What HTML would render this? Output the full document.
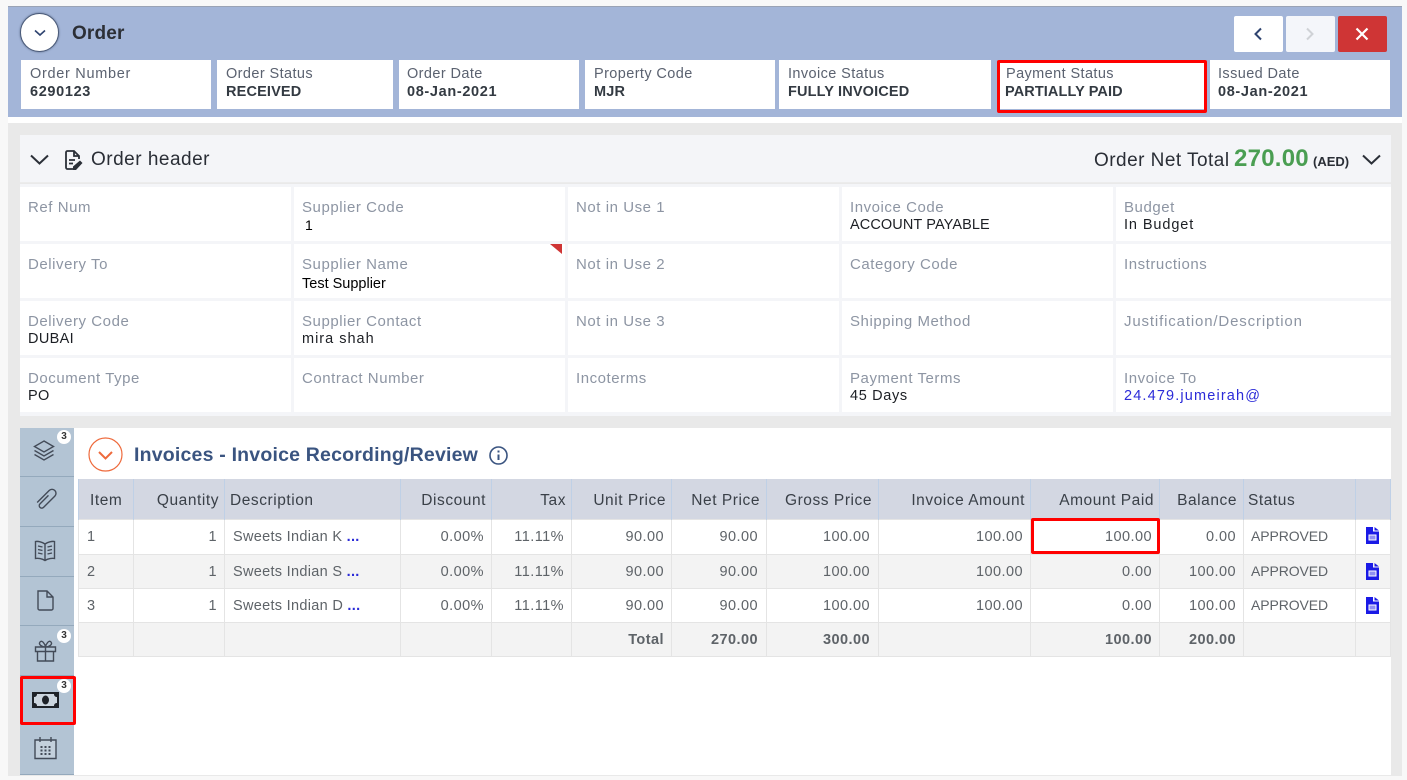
<!DOCTYPE html>
<html><head><meta charset="utf-8"><title>Order</title>
<style>
html,body{margin:0;padding:0;width:1407px;height:780px;overflow:hidden;background:#f8f8f8;font-family:"Liberation Sans",sans-serif}
.a{position:absolute}
#stage{position:relative;width:1407px;height:780px;overflow:hidden}
.c{position:absolute;background:#fff;top:60px;height:49px}
.c b,.c i{position:absolute;left:9px;white-space:nowrap;font-style:normal}
.c i{top:6px;font-size:14.5px;letter-spacing:.4px;color:#5b6270}
.c b{top:24px;font-size:14.5px;letter-spacing:.15px;color:#333a42}
.c b.n{letter-spacing:.65px}
.f{position:absolute;background:#fff;height:54px}
.f i,.f b{position:absolute;left:8px;white-space:nowrap;font-style:normal;font-weight:400}
.f i{top:12px;font-size:15px;letter-spacing:.55px;color:#8d95a3}
.f b{top:30px;font-size:14.5px;letter-spacing:.35px;color:#1c1f24}
table{position:absolute;left:78px;top:479px;width:1312px;border-collapse:collapse;table-layout:fixed;font-size:14.5px;letter-spacing:.45px;color:#5e6368}
th{background:#d3d7e2;height:40px;font-size:15.5px;font-weight:400;color:#3a4048;padding:4px 5px 0 5px;box-sizing:border-box;border-left:1px solid #bfd0e6;border-right:1px solid #bfd0e6;text-align:right;white-space:nowrap;letter-spacing:.55px}
td{height:31px;padding:2px 7px 0;border:1px solid #e4e4e4;text-align:right;white-space:nowrap;overflow:hidden}
tr.r1 td{height:34px;padding-top:0}
tr:nth-child(odd) td{background:#f3f3f3}
td.l{text-align:left;padding-left:8px;letter-spacing:.3px}
td.s{padding-left:7px;padding-top:0;height:33px;font-size:14px;letter-spacing:-.1px}
tr.r1 td.s{height:32px;padding-bottom:2px}
td:nth-child(7),td:nth-child(8){padding-right:8px}
th.l{text-align:left}
.tot td{font-weight:700;background:#f3f3f3;letter-spacing:.45px}
.dots{color:#2b2bd8;font-weight:700}
.ic{position:absolute;left:33px;fill:none;stroke:#434b58;stroke-width:1.4}
.bd{position:absolute;left:57px;width:14px;height:14px;border-radius:50%;background:#fff;font-size:10px;font-weight:700;text-align:center;line-height:14px;color:#333}
.dv{position:absolute;left:20px;width:54px;height:1px;background:#94a9bc}
.red{position:absolute;border:3px solid #f00;box-sizing:border-box;border-radius:2px}
.btn{position:absolute;top:16px;width:49px;height:36px;border-radius:2px;background:#fff}
</style></head><body><div id="stage">

<div class="a" style="left:8px;top:6px;width:1394px;height:770px;background:#e9e9e9"></div>
<div class="a" style="left:8px;top:6px;width:1394px;height:111px;background:#a3b5d8;border-top:1px solid #9aa3b5;box-sizing:border-box"></div>
<div class="a" style="left:8px;top:117px;width:1394px;height:6px;background:#fff"></div>

<div class="a" style="left:20px;top:13px;width:39px;height:39px;border-radius:50%;background:#fff;border:1px solid #4a5a78;box-sizing:border-box;box-shadow:0 0 2px #5a6a88"></div>
<svg class="a" style="left:33px;top:29px" width="14" height="8" fill="none" stroke="#2f4470" stroke-width="1.6"><path d="M2 1.500l5 4.500 5-4.500"/></svg>
<div class="a" style="left:72px;top:23px;font-size:19px;font-weight:700;color:#2c2f36;letter-spacing:.15px">Order</div>

<div class="btn" style="left:1234px"><svg class="a" style="left:19px;top:11px" width="10" height="14" fill="none" stroke="#2f4470" stroke-width="2"><path d="M8 1.500L2.500 7 8 12.500"/></svg></div>
<div class="btn" style="left:1286px;background:#f4f6fa"><svg class="a" style="left:19px;top:11px" width="10" height="14" fill="none" stroke="#cfd2d6" stroke-width="2"><path d="M2 1.500L7.500 7 2 12.500"/></svg></div>
<div class="btn" style="left:1338px;background:#cf3535"><svg class="a" style="left:17px;top:11px" width="14" height="14" fill="none" stroke="#fff" stroke-width="2.200"><path d="M1.500 1.500l11 11M12.500 1.500l-11 11"/></svg></div>

<div class="c" style="left:21px;width:190px"><i style="letter-spacing:.7px">Order Number</i><b class="n">6290123</b></div>
<div class="c" style="left:217px;width:176px"><i>Order Status</i><b>RECEIVED</b></div>
<div class="c" style="left:399px;width:180px"><i style="left:8px">Order Date</i><b class="n" style="left:8px">08-Jan-2021</b></div>
<div class="c" style="left:585px;width:190px"><i>Property Code</i><b>MJR</b></div>
<div class="c" style="left:779px;width:212px"><i>Invoice Status</i><b>FULLY INVOICED</b></div>
<div class="c" style="left:998px;width:208px"><i style="left:8px">Payment Status</i><b style="left:7px;letter-spacing:.1px">PARTIALLY PAID</b></div>
<div class="c" style="left:1210px;width:180px"><i style="left:8px">Issued Date</i><b class="n" style="left:8px">08-Jan-2021</b></div>
<div class="red" style="left:997px;top:60px;width:210px;height:53px"></div>

<div class="a" style="left:20px;top:135px;width:1371px;height:48px;background:#f4f5f8;border-bottom:1px solid #ececec;box-sizing:border-box"></div>
<svg class="a" style="left:30px;top:154px" width="19" height="11" fill="none" stroke="#2b3038" stroke-width="2"><path d="M1 1.500l8.500 8 8.500-8"/></svg>
<svg class="a" style="left:64px;top:150px" width="20" height="21" fill="none" stroke="#2b3038" stroke-width="1.800"><path d="M9 19H3.500a1.500 1.500 0 0 1-1.500-1.500V2.500A1.500 1.500 0 0 1 3.500 1H10l5 5v3M10 1v5h5M5 10h6M5 13.500h4"/><path d="M9 20v-3.500l7-6 2.500 2.500-6.500 7z" fill="#2b3038" stroke="none"/></svg>
<div class="a" style="left:91px;top:149px;font-size:19px;letter-spacing:.5px;color:#2a2e36;white-space:nowrap">Order header</div>
<div class="a" style="left:1094px;top:150px;font-size:19px;letter-spacing:.47px;color:#2a2e36;white-space:nowrap">Order Net Total</div>
<div class="a" style="left:1234px;top:145px;font-size:24px;font-weight:700;letter-spacing:.25px;color:#4a9e52;white-space:nowrap">270.00</div>
<div class="a" style="left:1313px;top:154px;font-size:13px;font-weight:700;color:#2a2e36;white-space:nowrap">(AED)</div>
<svg class="a" style="left:1362px;top:154px" width="19" height="11" fill="none" stroke="#2b3038" stroke-width="2"><path d="M1 1.500l8.500 8 8.500-8"/></svg>

<div class="a" style="left:20px;top:184px;width:1371px;height:232px;background:#f4f5f8"></div>

<div class="f" style="left:20px;top:187px;width:271px"><i>Ref Num</i></div>
<div class="f" style="left:294px;top:187px;width:271px"><i>Supplier Code</i><b style="left:11px;font-size:14px;letter-spacing:0;color:#000">1</b></div>
<div class="f" style="left:568px;top:187px;width:271px"><i>Not in Use 1</i></div>
<div class="f" style="left:842px;top:187px;width:271px"><i>Invoice Code</i><b style="letter-spacing:.1px">ACCOUNT PAYABLE</b></div>
<div class="f" style="left:1116px;top:187px;width:275px"><i>Budget</i><b style="letter-spacing:.9px">In Budget</b></div>

<div class="f" style="left:20px;top:244px;width:271px"><i>Delivery To</i></div>
<div class="f" style="left:294px;top:244px;width:271px"><i>Supplier Name</i><b style="top:32px;font-size:14.5px;letter-spacing:0;color:#000">Test Supplier</b></div>
<div class="f" style="left:568px;top:244px;width:271px"><i>Not in Use 2</i></div>
<div class="f" style="left:842px;top:244px;width:271px"><i>Category Code</i></div>
<div class="f" style="left:1116px;top:244px;width:275px"><i>Instructions</i></div>

<div class="f" style="left:20px;top:301px;width:271px"><i>Delivery Code</i><b>DUBAI</b></div>
<div class="f" style="left:294px;top:301px;width:271px"><i>Supplier Contact</i><b style="letter-spacing:1px">mira shah</b></div>
<div class="f" style="left:568px;top:301px;width:271px"><i>Not in Use 3</i></div>
<div class="f" style="left:842px;top:301px;width:271px"><i>Shipping Method</i></div>
<div class="f" style="left:1116px;top:301px;width:275px"><i style="letter-spacing:.85px">Justification/Description</i></div>

<div class="f" style="left:20px;top:358px;width:271px"><i>Document Type</i><b>PO</b></div>
<div class="f" style="left:294px;top:358px;width:271px"><i>Contract Number</i></div>
<div class="f" style="left:568px;top:358px;width:271px"><i>Incoterms</i></div>
<div class="f" style="left:842px;top:358px;width:271px"><i>Payment Terms</i><b style="letter-spacing:.65px">45 Days</b></div>
<div class="f" style="left:1116px;top:358px;width:275px"><i>Invoice To</i><b style="color:#2b2bd8;letter-spacing:1.15px">24.479.jumeirah@</b></div>
<svg class="a" style="left:550px;top:244px" width="12" height="10"><path d="M0 0h12v10z" fill="#cf3535"/></svg>

<!-- lower panel -->
<div class="a" style="left:20px;top:428px;width:54px;height:347px;background:#b3c4d4"></div>
<div class="a" style="left:74px;top:428px;width:1317px;height:347px;background:#fff"></div>
<div class="dv" style="top:476px"></div><div class="dv" style="top:526px"></div><div class="dv" style="top:576px"></div><div class="dv" style="top:625px"></div><div class="dv" style="top:675px"></div><div class="dv" style="top:774px"></div>

<svg class="ic" style="top:439px;left:32px" width="24" height="24"><path d="M12 2l9.500 5.500L12 13 2.500 7.500z"/><path d="M2.500 11.500L12 17l9.500-5.500M2.500 15.500L12 21l9.500-5.500"/></svg>
<svg class="ic" style="top:488px;left:34px" width="24" height="24"><g transform="rotate(45 12 12)"><path d="M10.500 7v12a2.500 2.500 0 0 0 5 0V3a4 4 0 0 0-8 0v17"/></g></svg>
<svg class="ic" style="top:539px" width="24" height="24"><path d="M12 5C9 3 5 2 2.500 2.500v17C5 19 9 19.500 12 21.500c3-2 7-2.500 9.500-2v-17C19 2 15 3 12 5zM12 5v16.500M5 7l4.500 1M5 10.500l4.500 1M5 14l4.500 1M19 7l-4.500 1M19 10.500l-4.500 1M19 14l-4.500 1"/></svg>
<svg class="ic" style="top:589px" width="24" height="24"><path d="M5 2h9l6 6v11.500a1.500 1.500 0 0 1-1.500 1.500h-12A1.500 1.500 0 0 1 5 19.500zM14 2v6h6"/></svg>
<svg class="ic" style="top:639px;left:33px" width="24" height="24"><path d="M2.500 8h20v4.500h-20zM4.500 12.500V22h16v-9.500M12.500 8v14M12.500 8C9 8 5 5.500 7 3s5 2 5.500 5c.5-3 3.500-7.500 5.500-5s-2 5-5.500 5z"/></svg>
<svg class="a" style="left:32px;top:692px" width="27" height="16"><rect x="1" y="1" width="25" height="14" fill="#ccd6df" stroke="#1e2228" stroke-width="2"/><path d="M0 0h5v2.500a3 3 0 0 1-2.500 2.500H0zM27 0h-5v2.500A3 3 0 0 0 24.500 5H27zM0 16h5v-2.500A3 3 0 0 0 2.500 11H0zM27 16h-5v-2.500a3 3 0 0 1 2.500-2.500H27z" fill="#1e2228"/><ellipse cx="13.500" cy="8" rx="3.500" ry="4.500" fill="#1e2228"/></svg>
<svg class="ic" style="top:736px;left:33px" width="24" height="24"><path d="M2 4h21v18.500H2z" fill="#c3d0dc"/><path d="M7 1v5M18 1v5"/><path d="M7.500 11h2M11.500 11h2M15.500 11h2M7.500 14.500h2M11.500 14.500h2M15.500 14.500h2M7.500 18h2M11.500 18h2M15.500 18h2" stroke-width="2"/></svg>

<div class="bd" style="top:430px">3</div>
<div class="bd" style="top:629px">3</div>
<div class="bd" style="top:679px">3</div>
<div class="red" style="left:20px;top:676px;width:56px;height:49px;z-index:3"></div>

<svg class="a" style="left:88px;top:437px" width="35" height="35" fill="none" stroke="#ee6a3c"><circle cx="17.500" cy="17.500" r="16.500" stroke-width="1.200"/><path d="M11 15l6.500 6.500L24 15" stroke-width="2"/></svg>
<div class="a" style="left:134px;top:444px;font-size:19.5px;font-weight:700;letter-spacing:.2px;color:#3a5480;white-space:nowrap">Invoices - Invoice Recording/Review</div>
<svg class="a" style="left:488px;top:445px" width="22" height="22" fill="none" stroke="#3a5480" stroke-width="1.600"><circle cx="10.500" cy="10.500" r="8.500"/><path d="M10.500 9.500v5.500" stroke-width="2"/><path d="M10.500 5.500v2" stroke-width="2"/></svg>

<table>
<colgroup><col style="width:55px"><col style="width:91px"><col style="width:176px"><col style="width:91px"><col style="width:80px"><col style="width:100px"><col style="width:95px"><col style="width:112px"><col style="width:152px"><col style="width:129px"><col style="width:84px"><col style="width:112px"><col style="width:35px"></colgroup>
<tr><th class="l" style="padding-left:11px">Item</th><th>Quantity</th><th class="l">Description</th><th>Discount</th><th>Tax</th><th>Unit Price</th><th style="padding-right:6px">Net Price</th><th style="padding-right:6px">Gross Price</th><th>Invoice Amount</th><th>Amount Paid</th><th style="padding-right:6px">Balance</th><th class="l" style="padding-left:4px">Status</th><th></th></tr>
<tr class="r1"><td class="l">1</td><td>1</td><td class="l">Sweets Indian K <span class="dots">...</span></td><td>0.00%</td><td>11.11%</td><td>90.00</td><td>90.00</td><td>100.00</td><td>100.00</td><td>100.00</td><td>0.00</td><td class="l s">APPROVED</td><td></td></tr>
<tr><td class="l">2</td><td>1</td><td class="l">Sweets Indian S <span class="dots">...</span></td><td>0.00%</td><td>11.11%</td><td>90.00</td><td>90.00</td><td>100.00</td><td>100.00</td><td>0.00</td><td>100.00</td><td class="l s">APPROVED</td><td></td></tr>
<tr><td class="l">3</td><td>1</td><td class="l">Sweets Indian D <span class="dots">...</span></td><td>0.00%</td><td>11.11%</td><td>90.00</td><td>90.00</td><td>100.00</td><td>100.00</td><td>0.00</td><td>100.00</td><td class="l s">APPROVED</td><td></td></tr>
<tr class="tot"><td></td><td></td><td></td><td></td><td></td><td>Total</td><td>270.00</td><td>300.00</td><td></td><td>100.00</td><td>200.00</td><td></td><td></td></tr>
</table>
<div class="red" style="left:1031px;top:518px;width:129px;height:36px"></div>
<svg class="a" style="left:1366px;top:527px" width="13" height="17"><path d="M0 0h7v4.500h6V17H0z" fill="#1a1ae6"/><path d="M8.500 0L13 3.500H8.500z" fill="#1a1ae6"/><rect x="3" y="8" width="7" height="5" fill="#8f8ff2" stroke="#fff"/></svg>
<svg class="a" style="left:1366px;top:563px" width="13" height="17"><path d="M0 0h7v4.500h6V17H0z" fill="#1a1ae6"/><path d="M8.500 0L13 3.500H8.500z" fill="#1a1ae6"/><rect x="3" y="8" width="7" height="5" fill="#8f8ff2" stroke="#fff"/></svg>
<svg class="a" style="left:1366px;top:597px" width="13" height="17"><path d="M0 0h7v4.500h6V17H0z" fill="#1a1ae6"/><path d="M8.500 0L13 3.500H8.500z" fill="#1a1ae6"/><rect x="3" y="8" width="7" height="5" fill="#8f8ff2" stroke="#fff"/></svg>

</div></body></html>
